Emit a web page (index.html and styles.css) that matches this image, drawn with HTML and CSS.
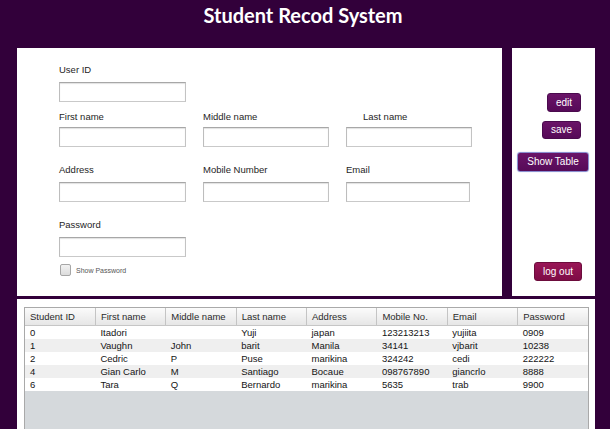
FILE: index.html
```html
<!DOCTYPE html>
<html>
<head>
<meta charset="utf-8">
<title>Student Recod System</title>
<link rel="stylesheet" href="styles.css">
</head>
<body>
<div class="page">
  <header class="titlebar"><h1 class="title">Student Recod System</h1></header>
  <div class="panels">
    <section class="form-panel">
      <div class="form-row row-1">
        <label class="field"><span class="lbl">User ID</span><input class="txt w1" type="text"></label>
      </div>
      <div class="form-row row-2">
        <label class="field"><span class="lbl">First name</span><input class="txt w1" type="text"></label>
        <label class="field"><span class="lbl">Middle name</span><input class="txt w2" type="text"></label>
        <label class="field"><span class="lbl indent">Last name</span><input class="txt w3" type="text"></label>
      </div>
      <div class="form-row row-3">
        <label class="field"><span class="lbl">Address</span><input class="txt w1" type="text"></label>
        <label class="field"><span class="lbl">Mobile Number</span><input class="txt w2" type="text"></label>
        <label class="field"><span class="lbl">Email</span><input class="txt w4" type="text"></label>
      </div>
      <div class="form-row row-4">
        <label class="field"><span class="lbl">Password</span><input class="txt w1" type="password"></label>
      </div>
      <label class="show-pass"><span class="check"></span><span class="show-text">Show Password</span></label>
    </section>
    <aside class="side-panel">
      <button class="btn btn-edit">edit</button>
      <button class="btn btn-save">save</button>
      <button class="btn btn-show">Show Table</button>
      <button class="btn btn-logout">log out</button>
    </aside>
  </div>
  <section class="table-panel">
    <div class="grid">
      <table class="data">
        <thead>
          <tr><th>Student ID</th><th>First name</th><th>Middle name</th><th>Last name</th><th>Address</th><th>Mobile No.</th><th>Email</th><th>Password</th></tr>
        </thead>
        <tbody>
          <tr><td>0</td><td>Itadori</td><td></td><td>Yuji</td><td>japan</td><td>123213213</td><td>yujiita</td><td>0909</td></tr>
          <tr class="alt"><td>1</td><td>Vaughn</td><td>John</td><td>barit</td><td>Manila</td><td>34141</td><td>vjbarit</td><td>10238</td></tr>
          <tr><td>2</td><td>Cedric</td><td>P</td><td>Puse</td><td>marikina</td><td>324242</td><td>cedi</td><td>222222</td></tr>
          <tr class="alt"><td>4</td><td>Gian Carlo</td><td>M</td><td>Santiago</td><td>Bocaue</td><td>098767890</td><td>giancrlo</td><td>8888</td></tr>
          <tr><td>6</td><td>Tara</td><td>Q</td><td>Bernardo</td><td>marikina</td><td>5635</td><td>trab</td><td>9900</td></tr>
        </tbody>
      </table>
    </div>
  </section>
</div>
</body>
</html>
```

FILE: styles.css
```css
* { box-sizing: border-box; }
html, body { margin: 0; padding: 0; }
body {
  background: #32003a;
  font-family: "Liberation Sans", Arial, sans-serif;
  overflow: hidden;
}
.page {
  height: 429px;
  display: flex;
  flex-direction: column;
}
.titlebar {
  height: 48px;
  padding-top: 5px;
  padding-left: 0;
}
.title {
  margin: 0;
  text-align: center;
  font-family: Lato, "Open Sans", sans-serif;
  font-weight: 700;
  font-size: 20px;
  line-height: 1;
  color: #ffffff;
  padding-right: 4px;
}
.panels {
  display: flex;
  gap: 10px;
  margin-left: 17px;
  height: 248px;
}
.form-panel {
  width: 485px;
  background: #ffffff;
  padding: 16px 0 0 42px;
}
.form-row {
  display: grid;
  grid-template-columns: 144px 143px 130px;
}
.field {
  display: flex;
  flex-direction: column;
  gap: 6px;
}
.row-2 { margin-top: 9px; }
.row-2 .field { gap: 4px; }
.row-3 { margin-top: 17px; }
.row-4 { margin-top: 17px; }
.lbl {
  font-size: 9.5px;
  line-height: 12px;
  color: #1e1e1e;
}
.lbl.indent { padding-left: 17px; }
.txt {
  height: 20px;
  margin: 0;
  border: 1px solid #c9c9c9;
  border-top-color: #a7a7a7;
  border-left-color: #bdbdbd;
  border-right-color: #c3c3c3;
  box-shadow: inset 0 1px 1px rgba(0, 0, 0, 0.12);
  background: #ffffff;
  padding: 0 3px;
  font-size: 10px;
  outline: none;
}
.w1 { width: 127px; }
.w2 { width: 126px; }
.w3 { width: 126px; }
.w4 { width: 124px; }
.show-pass {
  display: flex;
  align-items: center;
  gap: 5px;
  margin-top: 7px;
  margin-left: 1px;
}
.check {
  width: 11px;
  height: 12px;
  border: 1px solid #a6a6a6;
  border-radius: 2px;
  background: linear-gradient(#f2f2f2, #dcdcdc);
}
.show-text {
  font-size: 7px;
  color: #555555;
}
.side-panel {
  width: 83px;
  background: #ffffff;
  display: flex;
  flex-direction: column;
  align-items: flex-end;
  padding: 45px 14px 15px 0;
}
.btn {
  margin: 0;
  padding: 0;
  border: 1px solid #4a0a4e;
  border-radius: 3px;
  background: linear-gradient(#6a1468, #560a58);
  color: #ffffff;
  font-family: "Liberation Sans", Arial, sans-serif;
  font-size: 10px;
  line-height: 1;
  cursor: pointer;
}
.btn-edit { width: 34px; height: 19px; }
.btn-save { width: 39px; height: 18px; margin-top: 9px; }
.btn-show {
  width: 72px;
  height: 20px;
  margin-top: 13px;
  margin-right: -8px;
  border: 1px solid #8a8fd0;
  box-shadow: 0 0 1px #9aa0e0;
}
.btn-logout {
  width: 48px;
  height: 19px;
  margin-top: auto;
  margin-right: -1px;
  border-color: #6c0c3c;
  background: linear-gradient(#991556, #7e0c46);
}
.table-panel {
  flex: 1;
  margin: 3px 0 0 17px;
  width: 578px;
  background: #ffffff;
  padding: 8px 6px 0 7px;
  display: flex;
}
.grid {
  width: 565px;
  background: #d5d9dc;
  border: 1px solid #a9a9a9;
  border-bottom: none;
}
.data {
  width: 100%;
  table-layout: fixed;
  border-collapse: collapse;
  font-size: 9.5px;
}
.data th {
  height: 17px;
  padding: 0 0 0 5px;
  text-align: left;
  font-weight: normal;
  color: #2a2a2a;
  background: linear-gradient(#fbfbfb, #e6e6e6);
  border-right: 1px solid #c4c4c4;
  border-bottom: 1px solid #c6c6c6;
}
.data th:last-child { border-right: none; }
.data td {
  height: 13px;
  padding: 0 0 0 5px;
  line-height: 13px;
  color: #141414;
  background: #ffffff;
  white-space: nowrap;
  overflow: hidden;
}
.data tr.alt td { background: #efefef; }
```
